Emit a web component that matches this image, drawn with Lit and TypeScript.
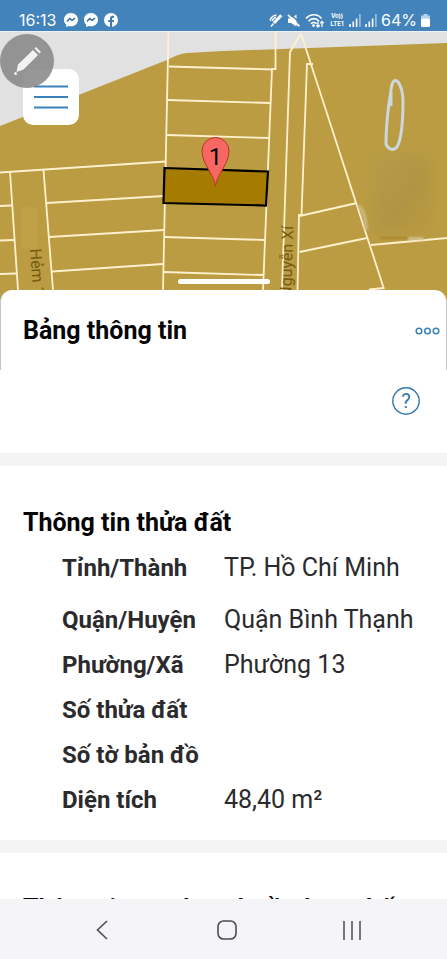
import { LitElement, html, css, svg } from "lit";
import { customElement } from "lit/decorators.js";

const shared = css`
  * { box-sizing: border-box; }
  svg { display: block; }
  button { border: 0; padding: 0; background: none; font: inherit; color: inherit; cursor: pointer; }
`;

@customElement("status-bar")
class StatusBar extends LitElement {
  static styles = [shared, css`
    :host { display: flex; align-items: flex-end; justify-content: space-between; height: 31px; padding: 0 17px 0 19px; background: #4283bc; color: #fff; font: 400 16px/22px Inter, sans-serif; }
    .group { display: flex; align-items: center; gap: 6px; }
    .tight { gap: 4px; }
    .time { margin-right: 2px; }
  `];
  messenger() {
    return html`<svg width="14" height="14" viewBox="0 0 14 14" aria-hidden="true"><path fill="#fff" d="M7 0C3 0 0 2.900 0 6.700c0 2 .8 3.700 2.200 4.900V14l2.300-1.100c.8.2 1.600.4 2.500.4 4 0 7-2.900 7-6.600S11 0 7 0z"/><path d="M3 8.400 5.700 5.600 8.100 7.300 11 5" fill="none" stroke="#356c9d" stroke-width="1.500"/></svg>`;
  }
  bars() {
    return html`<svg width="12" height="13" viewBox="0 0 12 13" aria-hidden="true"><path stroke="#fff" stroke-width="1.600" d="M1 13v-3M4.300 13V7.500"/><path stroke="#fff" stroke-width="1.600" d="M7.600 13V4.500"/><path stroke="#9fc3e2" stroke-width="1.600" d="M10.900 13V0"/></svg>`;
  }
  render() {
    return html`
      <div class="group">
        <span class="time">16:13</span>
        ${this.messenger()}${this.messenger()}
        <svg width="14" height="14" viewBox="0 0 14 14" aria-hidden="true"><circle cx="7" cy="7" r="7" fill="#fff"/><path d="M6 14V9H4.200V6.900H6V5.400C6 3.600 7 2.700 8.600 2.700l1.600.1v1.900h-1c-.8 0-1.100.4-1.100 1v1.200h2L9.800 9H8.100v5z" fill="#3f79ad"/></svg>
      </div>
      <div class="group tight">
        <svg width="14" height="13" viewBox="0 0 14 13" fill="none" stroke="#fff" aria-hidden="true"><path stroke-width="3" d="M12.300 1.300 5 9"/><path stroke-width="1.500" d="M4.500 9.500 2 12.500M1 6.500C2 3 4 1.500 7.500 1M3 7C3.800 5 5 4 7 3"/></svg>
        <svg width="14" height="13" viewBox="0 0 14 13" aria-hidden="true"><path fill="#fff" d="M1 4.500h3L9.500.5v12L4 9H1z"/><path stroke="#4283bc" stroke-width="1.500" d="M3-.5 14 10"/><path stroke="#fff" stroke-width="1.800" d="M1 .8 12.500 12.300"/></svg>
        <svg width="20" height="15" viewBox="0 0 20 15" fill="none" stroke="#fff" aria-hidden="true"><path stroke-width="1.700" d="M1 5.500c4.500-5 11.500-5 15.500 0M3.500 8.300c3-3.500 7.500-3.500 10.500 0M6 10.800c1.800-2 3.800-2 5.600 0"/><circle cx="8.500" cy="12.500" r="1" fill="#fff"/><path stroke-width="1.300" d="M13 8.500V14M11.300 12.300 13 14l1.700-1.700M17 14V8.500M15.300 10.200 17 8.500l1.700 1.700"/></svg>
        <svg width="16" height="16" viewBox="0 0 16 16" fill="#fff" font-family="Inter, sans-serif" font-weight="700" font-size="6" aria-label="VoLTE"><text x="8" y="6" text-anchor="middle">Vo))</text><text x="8" y="14" text-anchor="middle">LTE1</text></svg>
        ${this.bars()}${this.bars()}
        <span>64%</span>
        <svg width="9" height="13" viewBox="0 0 9 13" aria-hidden="true"><path fill="#b5d0e8" d="M2.500 0h4v1.500H9V5H0V1.500h2.500z"/><rect y="4.500" width="9" height="8.500" rx="1.500" fill="#fff"/></svg>
      </div>`;
  }
}

@customElement("parcel-map")
class ParcelMap extends LitElement {
  static styles = [shared, css`
    :host { display: block; position: relative; height: 275px; background: #bb9c43; overflow: hidden; }
    .plan { width: 100%; height: 275px; }
    .menu { position: absolute; left: 23px; top: 38px; width: 56px; height: 56px; border-radius: 10px; background: #fff; display: grid; place-items: center; }
    .pen { position: absolute; left: 0; top: 3px; width: 54px; height: 54px; border-radius: 50%; background: #858585d9; display: grid; place-items: center; }
    .handle { position: absolute; left: 50%; top: 248px; width: 92px; height: 5px; margin-left: -46px; border-radius: 3px; background: #fff; }
  `];
  render() {
    const lines = [
      "M168.500 31 163 290", "M169 66.500 273 69.500", "M168 100 271 103", "M166.500 135 270 138",
      "M275.500 31V69H272L263 290", "M164 237 264.500 240", "M163 272 263 275",
      "M301 33.500 290 52 282 290", "M301 33.500 384 289", "M313 64H307L301.500 215H299L297.500 290",
      "M299.500 216 357 203", "M299.500 252 367 238", "M371 245 447 238", "M369 289.500 384 288",
      "M0 172.500 166 161.500", "M10 172 18 290", "M43.500 170 53 290",
      "M0 206 12 205.500", "M0 240.500 14 240", "M0 274 16 273.500",
      "M47 203 164 196", "M49 237 164 230", "M52 271.500 163 264",
    ];
    return html`
      <svg class="plan" viewBox="0 31 447 275" preserveAspectRatio="xMidYMin slice" role="img" aria-label="Bản đồ thửa đất">
        <defs>
          <linearGradient id="patch" x1="0" y1="0" x2="1" y2="1"><stop offset="0" stop-color="#b29a50"/><stop offset=".6" stop-color="#ab9044"/><stop offset="1" stop-color="#b7983f"/></linearGradient>
          <filter id="soft" x="-20%" y="-20%" width="140%" height="140%"><feGaussianBlur stdDeviation="6"/></filter>
          <filter id="smear" x="-20" y="-20" width="500" height="340" filterUnits="userSpaceOnUse"><feGaussianBlur stdDeviation="1"/></filter>
        </defs>
        <rect y="31" width="447" height="275" fill="#bb9c43"/>
        <path d="M0 31H447V43L223 51 187 53Q178 54 167 60L0 126z" fill="#e2e1e1"/>
        <path d="M0 31.500H447" stroke="#edf1f4"/>
        <rect x="372" y="155" width="58" height="78" fill="url(#patch)" opacity=".55" filter="url(#soft)"/>
        <rect x="21" y="207" width="16" height="42" rx="3" fill="#c0a249" opacity=".7"/>
        <g fill="none" stroke="#fff1cd" stroke-width="1.800">${lines.map((d) => svg`<path d=${d} />`)}</g>
        <path d="M358 205Q366 213 366 230" fill="none" stroke="#cdbd89" stroke-width="3" filter="url(#smear)"/>
        <path d="M380 238H425" stroke="#a98428" stroke-width="2" filter="url(#smear)"/>
        <path d="M408 238.500H424" stroke="#e9dfc4" stroke-width="2" filter="url(#smear)"/>
        <text transform="translate(30 249) rotate(86)" font-family="Roboto, sans-serif" font-size="16" fill="#755b13">Hẻm 1</text>
        <text transform="translate(291 298) rotate(-88)" font-family="Roboto, sans-serif" font-size="16" fill="#755b13">Nguyễn Xí</text>
        <path d="M164.500 168 268 171.500 266 205.500 163.500 203z" fill="#a57c00" stroke="#000" stroke-width="2.200"/>
        <path d="M215.500 186C214 174 202 164 202 151a13.500 13.500 0 0 1 27 0C229 164 217 174 215.500 186z" fill="#f76863" stroke="#b9332c"/>
        <text x="215.500" y="165" text-anchor="middle" font-family="Roboto, sans-serif" font-size="23" fill="#000">1</text>
        <path d="M391 106C389 101 391 86 393 82 398 76 403 90 403 101 403 120 401 140 397 147 393 152 387 148 386 144 386 130 388 105 391 92L391 106" fill="none" stroke="#cbd8dd" stroke-width="3" stroke-linejoin="round"/>
      </svg>
      <button class="menu" aria-label="Menu"><svg width="36" height="24" viewBox="0 0 36 24" stroke="#3a83bd" stroke-width="1.800"><path d="M1 1.500h34M1 12h34M1 22.500h34"/></svg></button>
      <button class="pen" aria-label="Chỉnh sửa"><svg width="28" height="28" viewBox="0 0 28 28" fill="#f2f2f2"><path d="M21.500 1.500 23 0l5 5-1.500 1.500zM20 3l5 5L10.500 22.500 3.500 25 5 17.500z"/><circle cx="2.500" cy="26.500" r="1.500"/></svg></button>
      <div class="handle"></div>`;
  }
}

@customElement("app-root")
class AppRoot extends LitElement {
  static styles = [shared, css`
    :host { display: flex; flex-direction: column; height: 100vh; background: #fff; color: #2b2b2d; font: 400 25px/28px Roboto, sans-serif; overflow: hidden; }
    status-bar, parcel-map, .top, .help-row, .land, .nav { flex: none; }
    .top { position: relative; display: flex; align-items: center; justify-content: space-between; height: 80px; margin-top: -16px; padding: 2px 6px 0 22px; border: solid #c4c4c4; border-width: 0 1px; border-radius: 12px 12px 0 0; background: #fff; }
    h1, h2 { margin: 0; color: #050505; font: 700 25px/28px Roboto, sans-serif; }
    .help-row { display: flex; justify-content: flex-end; padding: 17px 27px 38px; border-bottom: 13px solid #f4f4f4; }
    .help { color: #3478ad; }
    .land { padding: 43px 23px 18px; border-bottom: 13px solid #f4f4f4; }
    table { margin: 8px 0 0 39px; border-collapse: collapse; }
    th, td { height: 45px; padding: 9px 0 0; text-align: left; white-space: nowrap; vertical-align: top; }
    tr:first-child > * { height: 52px; }
    th { width: 162px; font-size: 24px; font-weight: 700; }
    .planning { flex: 1; min-height: 0; padding: 42px 23px 0; overflow: hidden; white-space: nowrap; }
    .nav { display: grid; grid-template-columns: 1fr 1fr 1fr; height: 60px; padding: 2px 33px 0 39px; background: #f5f5f7; }
    .nav button { display: grid; place-items: center; }
  `];
  rows = [
    ["Tỉnh/Thành", "TP. Hồ Chí Minh"], ["Quận/Huyện", "Quận Bình Thạnh"], ["Phường/Xã", "Phường 13"],
    ["Số thửa đất", ""], ["Số tờ bản đồ", ""], ["Diện tích", "48,40 m²"],
  ];
  render() {
    return html`
      <status-bar></status-bar>
      <parcel-map></parcel-map>
      <header class="top">
        <h1>Bảng thông tin</h1>
        <button aria-label="Thêm"><svg width="25" height="8" viewBox="0 0 25 8" fill="none" stroke="#3d82b5" stroke-width="1.500"><circle cx="4" cy="4" r="2.800"/><circle cx="12.500" cy="4" r="2.800"/><circle cx="21" cy="4" r="2.800"/></svg></button>
      </header>
      <div class="help-row">
        <button class="help" aria-label="Trợ giúp"><svg width="28" height="28" viewBox="0 0 28 28"><circle cx="14" cy="14" r="13.200" fill="none" stroke="currentColor" stroke-width="1.400"/><text x="14" y="21" text-anchor="middle" font-size="20" fill="currentColor">?</text></svg></button>
      </div>
      <section class="land">
        <h2>Thông tin thửa đất</h2>
        <table>${this.rows.map(([k, v]) => html`<tr><th scope="row">${k}</th><td>${v}</td></tr>`)}</table>
      </section>
      <section class="planning"><h2>Thông tin quy hoạch về nhau nhất</h2></section>
      <nav class="nav">
        <button aria-label="Quay lại"><svg width="12" height="20" viewBox="0 0 12 20" fill="none" stroke="#4c4c50" stroke-width="1.600"><path d="M11 1 1.500 10 11 19"/></svg></button>
        <button aria-label="Trang chủ"><svg width="20" height="20" viewBox="0 0 20 20" fill="none" stroke="#4c4c50" stroke-width="1.600"><rect x="1" y="1" width="18" height="18" rx="5.500"/></svg></button>
        <button aria-label="Gần đây"><svg width="18" height="19" viewBox="0 0 18 19" stroke="#4c4c50" stroke-width="1.500"><path d="M1 0v19M9 0v19M17 0v19"/></svg></button>
      </nav>`;
  }
}
